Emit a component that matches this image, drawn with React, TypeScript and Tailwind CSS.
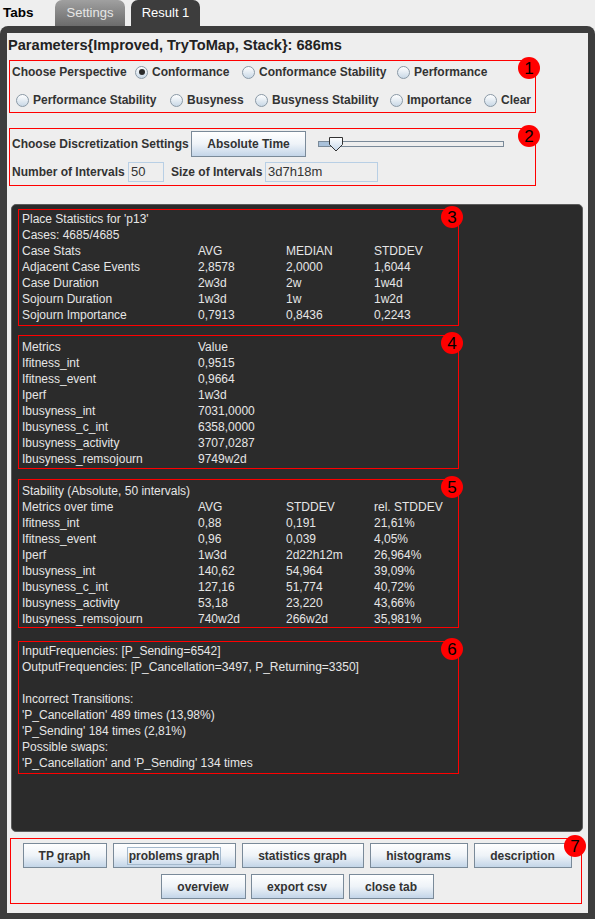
import React from 'react';

const RED = 'border-[#ff0000]';

const Badge = ({ n }: { n: number }) => (
  <div className="absolute -top-[4px] -right-[5px] w-[22px] h-[22px] rounded-full bg-[#ff0000] flex items-center justify-center text-[17px] leading-none text-black">
    {n}
  </div>
);

const Radio = ({ label, checked, w }: { label: string; checked?: boolean; w?: string }) => (
  <div className={`flex items-center gap-[4px] ${w ?? ''}`}>
    <span className="w-[13px] h-[13px] rounded-full border border-[#8a99a6] bg-gradient-to-b from-white to-[#c9d8e6] flex items-center justify-center">
      {checked && <span className="w-[6px] h-[6px] rounded-full bg-[#2a2a2a]" />}
    </span>
    <span className="font-bold text-[#333333]">{label}</span>
  </div>
);

const JButton = ({ label, w, focused }: { label: string; w: string; focused?: boolean }) => (
  <div className={`${w} h-[25px] border border-[#7a8a99] bg-gradient-to-b from-white via-[#eef3f8] to-[#c3d5e8] flex items-center justify-center font-bold text-[#333333]`}>
    <span className={focused ? 'border border-[#a3b8cc] px-[1px] leading-[16px]' : ''}>{label}</span>
  </div>
);

const Row = ({ cells }: { cells: string[] }) => (
  <div className="grid grid-cols-[176px_88px_88px_1fr] h-[16px] leading-[16px]">
    {cells.map((c, i) => (
      <span key={i} className="whitespace-nowrap">{c}</span>
    ))}
  </div>
);

const caseStats = [
  ['Case Stats', 'AVG', 'MEDIAN', 'STDDEV'],
  ['Adjacent Case Events', '2,8578', '2,0000', '1,6044'],
  ['Case Duration', '2w3d', '2w', '1w4d'],
  ['Sojourn Duration', '1w3d', '1w', '1w2d'],
  ['Sojourn Importance', '0,7913', '0,8436', '0,2243'],
];

const metrics = [
  ['Metrics', 'Value'],
  ['Ifitness_int', '0,9515'],
  ['Ifitness_event', '0,9664'],
  ['Iperf', '1w3d'],
  ['Ibusyness_int', '7031,0000'],
  ['Ibusyness_c_int', '6358,0000'],
  ['Ibusyness_activity', '3707,0287'],
  ['Ibusyness_remsojourn', '9749w2d'],
];

const stability = [
  ['Metrics over time', 'AVG', 'STDDEV', 'rel. STDDEV'],
  ['Ifitness_int', '0,88', '0,191', '21,61%'],
  ['Ifitness_event', '0,96', '0,039', '4,05%'],
  ['Iperf', '1w3d', '2d22h12m', '26,964%'],
  ['Ibusyness_int', '140,62', '54,964', '39,09%'],
  ['Ibusyness_c_int', '127,16', '51,774', '40,72%'],
  ['Ibusyness_activity', '53,18', '23,220', '43,66%'],
  ['Ibusyness_remsojourn', '740w2d', '266w2d', '35,981%'],
];

const frequencies = [
  'InputFrequencies: [P_Sending=6542]',
  'OutputFrequencies: [P_Cancellation=3497, P_Returning=3350]',
  '',
  'Incorrect Transitions:',
  "'P_Cancellation' 489 times (13,98%)",
  "'P_Sending' 184 times (2,81%)",
  'Possible swaps:',
  "'P_Cancellation' and 'P_Sending' 134 times",
];

export default function App() {
  return (
    <div className="w-[595px] h-[919px] bg-[#eeeeee] overflow-hidden font-['Liberation_Sans',Arial,sans-serif] text-[12px]">
      {/* tab strip */}
      <div className="flex items-end h-[26px]">
        <div className="w-[55px] pl-[3px] h-[26px] flex items-center font-bold text-[13.5px] text-black">Tabs</div>
        <div className="w-[70px] h-[26px] rounded-t-[7px] bg-gradient-to-b from-[#a0a0a0] to-[#6c6c6c] flex items-center justify-center text-[13px] text-[#e6e6e6]">
          Settings
        </div>
        <div className="ml-[6px] w-[69px] h-[26px] rounded-t-[7px] bg-[#3d3d3d] flex items-center justify-center text-[13px] text-white">
          Result 1
        </div>
      </div>

      {/* tab frame */}
      <div className="h-[893px] bg-[#3d3d3d] rounded-t-[8px] pt-[7px] pl-[7px] pr-[7px] pb-[6px]">
        <div className="h-full bg-[#eeeeee] flex flex-col">
          <div className="mt-[3px] ml-[1px] h-[18px] leading-[18px] font-bold text-[14.6px] text-[#222222]">
            Parameters{'{'}Improved, TryToMap, Stack{'}'}: 686ms
          </div>

          {/* perspective */}
          <div className={`relative mt-[6px] ml-[2px] w-[527px] h-[53px] border ${RED} pt-[1px] pl-[2px]`}>
            <div className="flex items-center h-[20px]">
              <span className="w-[123px] font-bold text-[#333333]">Choose Perspective</span>
              <Radio label="Conformance" checked w="w-[107px]" />
              <Radio label="Conformance Stability" w="w-[155px]" />
              <Radio label="Performance" />
            </div>
            <div className="flex items-center h-[20px] mt-[8px] pl-[4px]">
              <Radio label="Performance Stability" w="w-[154px]" />
              <Radio label="Busyness" w="w-[85px]" />
              <Radio label="Busyness Stability" w="w-[135px]" />
              <Radio label="Importance" w="w-[94px]" />
              <Radio label="Clear" />
            </div>
            <Badge n={1} />
          </div>

          {/* discretization */}
          <div className={`relative mt-[15px] ml-[2px] w-[527px] h-[58px] border ${RED} pt-[2px] pl-[2px]`}>
            <div className="flex items-center h-[26px]">
              <span className="w-[179px] font-bold text-[#333333] whitespace-nowrap">Choose Discretization Settings</span>
              <div className="w-[115px] h-[26px] border border-[#7a8a99] bg-gradient-to-b from-white via-[#eef3f8] to-[#c3d5e8] flex items-center justify-center font-bold text-[#333333]">
                Absolute Time
              </div>
              <div className="relative ml-[12px] w-[186px] h-[16px] flex items-center">
                <div className="w-full h-[6px] border border-[#7a8a99] bg-[#eeeeee] flex">
                  <div className="w-[12px] h-full bg-[#a9c1da]" />
                </div>
                <svg className="absolute left-[10px] top-0" width="16" height="16" viewBox="0 0 16 16">
                  <defs>
                    <linearGradient id="thumb" x1="0" y1="0" x2="0" y2="1">
                      <stop offset="0" stopColor="#ffffff" />
                      <stop offset="1" stopColor="#c3d5e8" />
                    </linearGradient>
                  </defs>
                  <path d="M1.5 1.5 H14.5 V8.5 L8 15 L1.5 8.5 Z" fill="url(#thumb)" stroke="#333333" strokeWidth="1" />
                </svg>
              </div>
            </div>
            <div className="flex items-center h-[20px] mt-[5px]">
              <span className="w-[116px] font-bold text-[#333333]">Number of Intervals</span>
              <div className="w-[36px] h-[20px] border border-[#b8cfe5] pl-[2px] flex items-center text-[13px] text-[#333333]">50</div>
              <span className="ml-[7px] w-[94px] font-bold text-[#333333]">Size of Intervals</span>
              <div className="w-[113px] h-[20px] border border-[#b8cfe5] pl-[2px] flex items-center text-[13px] text-[#333333]">3d7h18m</div>
            </div>
            <Badge n={2} />
          </div>

          {/* results */}
          <div className="mt-[18px] ml-[4px] w-[572px] h-[628px] bg-[#2b2b2b] rounded-[5px] border border-[#5c5c5c] pl-[6px] text-[#e6e6e6]">
            <div className={`relative mt-[4px] w-[441px] h-[117px] border ${RED} pt-[1px] pl-[3px]`}>
              <div className="h-[16px] leading-[16px]">Place Statistics for 'p13'</div>
              <div className="h-[16px] leading-[16px]">Cases: 4685/4685</div>
              {caseStats.map((r, i) => (
                <Row key={i} cells={r} />
              ))}
              <Badge n={3} />
            </div>

            <div className={`relative mt-[9px] w-[441px] h-[134px] border ${RED} pt-[3px] pl-[3px]`}>
              {metrics.map((r, i) => (
                <Row key={i} cells={r} />
              ))}
              <Badge n={4} />
            </div>

            <div className={`relative mt-[10px] w-[441px] h-[149px] border ${RED} pt-[3px] pl-[3px]`}>
              <div className="h-[16px] leading-[16px]">Stability (Absolute, 50 intervals)</div>
              {stability.map((r, i) => (
                <Row key={i} cells={r} />
              ))}
              <Badge n={5} />
            </div>

            <div className={`relative mt-[13px] w-[441px] h-[133px] border ${RED} pt-[1px] pl-[3px]`}>
              {frequencies.map((l, i) => (
                <div key={i} className="h-[16px] leading-[16px] whitespace-nowrap">{l}</div>
              ))}
              <Badge n={6} />
            </div>
          </div>

          {/* buttons */}
          <div className={`relative mt-[6px] ml-[3px] w-[572px] h-[66px] border ${RED} pt-[4px] flex flex-col items-center gap-[6px]`}>
            <div className="flex gap-[6px] pl-[2px]">
              <JButton label="TP graph" w="w-[84px]" />
              <JButton label="problems graph" w="w-[123px]" focused />
              <JButton label="statistics graph" w="w-[122px]" />
              <JButton label="histograms" w="w-[98px]" />
              <JButton label="description" w="w-[98px]" />
            </div>
            <div className="flex gap-[5px] pl-[2px]">
              <JButton label="overview" w="w-[85px]" />
              <JButton label="export csv" w="w-[93px]" />
              <JButton label="close tab" w="w-[85px]" />
            </div>
            <Badge n={7} />
          </div>
        </div>
      </div>
    </div>
  );
}
